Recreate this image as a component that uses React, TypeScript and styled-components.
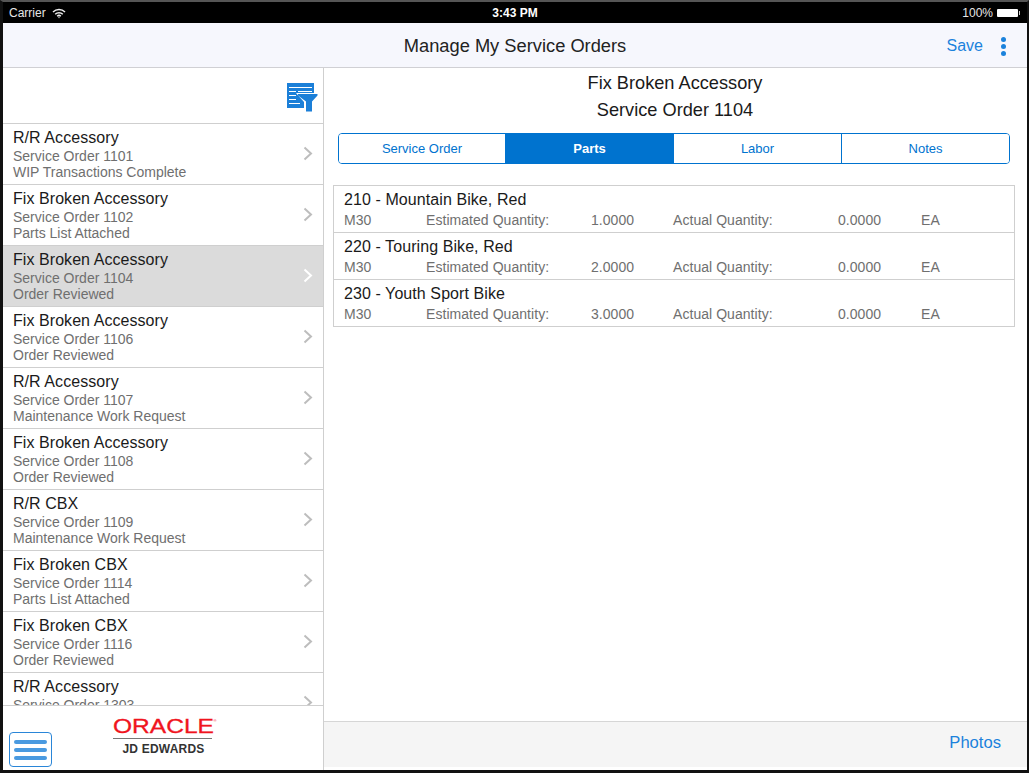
import React from "react";
import styled, { createGlobalStyle } from "styled-components";

const Global = createGlobalStyle`
  html, body { margin: 0; padding: 0; background: #000; }
  body { font-family: "Liberation Sans", Arial, sans-serif; }
  * { box-sizing: border-box; }
`;

const Frame = styled.div`
  width: 1029px;
  height: 773px;
  display: flex;
  flex-direction: column;
  background: #000;
  border-top: 2px solid #555;
  border-left: 3px solid #111;
  border-right: 2px solid #111;
  border-bottom: 3px solid #111;
  overflow: hidden;
`;

const StatusBar = styled.div`
  height: 21px;
  flex: none;
  background: #000;
  color: #e6e6e6;
  font-size: 12px;
  display: grid;
  grid-template-columns: 1fr auto 1fr;
  align-items: center;
  padding: 1px 9px 0 6px;
`;

const StatusLeft = styled.div`
  display: flex;
  align-items: center;
  gap: 6px;
`;

const StatusRight = styled.div`
  display: flex;
  align-items: center;
  justify-content: flex-end;
  gap: 4px;
`;

const Clock = styled.div`
  font-weight: 700;
  color: #fff;
  font-size: 12px;
  margin-left: 3px;
`;

const Battery = styled.div`
  width: 21px;
  height: 8px;
  background: #fff;
  border-radius: 1px;
  position: relative;
  &::after {
    content: "";
    position: absolute;
    right: -2px;
    top: 2px;
    width: 1px;
    height: 4px;
    background: #ccc;
  }
`;

const NavBar = styled.div`
  height: 45px;
  flex: none;
  background: #f6f7fd;
  border-bottom: 1px solid #d0d0d4;
  display: grid;
  grid-template-columns: 1fr auto 1fr;
  align-items: center;
`;

const NavTitle = styled.div`
  font-size: 18.3px;
  color: #222;
  padding-top: 1px;
`;

const NavActions = styled.div`
  display: flex;
  justify-content: flex-end;
  align-items: center;
  gap: 18px;
  padding: 2px 21px 0 0;
`;

const LinkText = styled.span`
  color: #1b82dc;
  font-size: 16px;
`;

const PhotosLink = styled(LinkText)`
  font-size: 16.6px;
`;

const Kebab = styled.div`
  display: flex;
  flex-direction: column;
  gap: 2px;
  i {
    display: block;
    width: 5px;
    height: 5px;
    border-radius: 50%;
    background: #1b82dc;
  }
`;

const Body = styled.div`
  flex: 1;
  min-height: 0;
  display: flex;
  background: #fff;
`;

const Sidebar = styled.aside`
  width: 321px;
  flex: none;
  display: flex;
  flex-direction: column;
  border-right: 1px solid #cfcfcf;
`;

const FilterBar = styled.div`
  height: 56px;
  flex: none;
  border-bottom: 1px solid #cfcfcf;
  display: flex;
  justify-content: flex-end;
  padding: 15px 5px 0 0;
`;

const List = styled.div`
  flex: 1;
  min-height: 0;
  overflow: hidden;
`;

const Row = styled.div<{ $selected?: boolean }>`
  height: 61px;
  border-bottom: 1px solid #cfcfcf;
  padding: 4px 10px 0 10px;
  position: relative;
  background: ${(p) => (p.$selected ? "#dbdbdb" : "#fff")};
`;

const RowTitle = styled.div`
  font-size: 16px;
  line-height: 19px;
  letter-spacing: 0.06px;
  color: #1a1a1a;
  margin-bottom: 1px;
`;

const RowSub = styled.div`
  font-size: 14px;
  line-height: 16px;
  color: #6f6f6f;
`;

const Chevron = styled.svg`
  position: absolute;
  right: 10px;
  top: 22px;
  width: 10px;
  height: 15px;
`;

const SideFooter = styled.div`
  height: 65px;
  flex: none;
  border-top: 1px solid #cfcfcf;
  display: flex;
  position: relative;
  justify-content: center;
`;

const MenuButton = styled.div`
  position: absolute;
  left: 6px;
  bottom: 3px;
  width: 43px;
  height: 35px;
  border: 1px solid #2a86d8;
  border-radius: 4px;
  display: flex;
  flex-direction: column;
  justify-content: center;
  align-items: center;
  gap: 4px;
  i {
    display: block;
    width: 33px;
    height: 4px;
    border-radius: 2px;
    background: #4a9ae0;
  }
`;

const Logo = styled.div`
  width: 104px;
  margin-left: 3px;
  padding-top: 10px;
  display: flex;
  flex-direction: column;
  align-items: flex-start;
`;

const LogoMark = styled.svg`
  width: 104px;
  height: 20px;
  display: block;
`;

const LogoRule = styled.div`
  width: 99px;
  height: 1px;
  background: #777;
  margin-top: 2px;
`;

const LogoSub = styled.div`
  font-size: 12px;
  font-weight: 700;
  letter-spacing: 0.2px;
  color: #333;
  margin: 3px 0 0 10px;
  line-height: 14px;
`;

const Main = styled.main`
  flex: 1;
  min-width: 0;
  display: flex;
  flex-direction: column;
`;

const Content = styled.div`
  flex: 1;
  min-height: 0;
  padding: 0 12px 0 9px;
`;

const Heading = styled.div`
  font-size: 18.2px;
  line-height: 27px;
  color: #1a1a1a;
  text-align: center;
  padding: 2px 0 0 2px;
`;

const Tabs = styled.div`
  margin: 9px 5px 0 5px;
  height: 31px;
  display: grid;
  grid-template-columns: 166px 168px 168px 1fr;
  border: 1px solid #0073cf;
  border-radius: 4px;
  overflow: hidden;
`;

const Tab = styled.div<{ $active?: boolean }>`
  display: flex;
  align-items: center;
  justify-content: center;
  font-size: 13px;
  color: ${(p) => (p.$active ? "#fff" : "#0073cf")};
  background: ${(p) => (p.$active ? "#0073cf" : "#fff")};
  font-weight: ${(p) => (p.$active ? 700 : 400)};
  & + & { border-left: 1px solid #0073cf; }
`;

const Table = styled.div`
  margin-top: 21px;
  border: 1px solid #cfcfcf;
`;

const Part = styled.div`
  height: 46px;
  padding: 4px 10px 0 10px;
  & + & {
    height: 47px;
    border-top: 1px solid #cfcfcf;
  }
`;

const PartTitle = styled.div`
  font-size: 16px;
  line-height: 19px;
  letter-spacing: 0.08px;
  color: #1a1a1a;
`;

const PartGrid = styled.div`
  display: grid;
  grid-template-columns: 82px 165px 82px 165px 83px auto;
  font-size: 14px;
  line-height: 17px;
  letter-spacing: 0.05px;
  color: #6f6f6f;
  margin-top: 3px;
`;

const BottomBar = styled.div`
  height: 46px;
  flex: none;
  margin-bottom: 3px;
  background: #f5f5f5;
  border-top: 1px solid #d6d6d6;
  display: flex;
  align-items: center;
  justify-content: flex-end;
  padding: 0 26px 3px 0;
`;

const rows = [
  ["R/R Accessory", "Service Order 1101", "WIP Transactions Complete"],
  ["Fix Broken Accessory", "Service Order 1102", "Parts List Attached"],
  ["Fix Broken Accessory", "Service Order 1104", "Order Reviewed"],
  ["Fix Broken Accessory", "Service Order 1106", "Order Reviewed"],
  ["R/R Accessory", "Service Order 1107", "Maintenance Work Request"],
  ["Fix Broken Accessory", "Service Order 1108", "Order Reviewed"],
  ["R/R CBX", "Service Order 1109", "Maintenance Work Request"],
  ["Fix Broken CBX", "Service Order 1114", "Parts List Attached"],
  ["Fix Broken CBX", "Service Order 1116", "Order Reviewed"],
  ["R/R Accessory", "Service Order 1303", "Order Reviewed"],
];

const parts = [
  ["210 - Mountain Bike, Red", "1.0000"],
  ["220 - Touring Bike, Red", "2.0000"],
  ["230 - Youth Sport Bike", "3.0000"],
];

const Wifi = () => (
  <svg width="14" height="11" viewBox="0 0 14 11" fill="none" stroke="#eee" strokeWidth="1.5">
    <path d="M1 4 A8.5 8.5 0 0 1 13 4" />
    <path d="M3.2 6.2 A5.4 5.4 0 0 1 10.8 6.2" />
    <path d="M5.2 8.2 A2.6 2.6 0 0 1 8.8 8.2" />
    <circle cx="7" cy="9.6" r="0.7" fill="#eee" stroke="none" />
  </svg>
);

const FilterIcon = () => (
  <svg width="31" height="29" viewBox="0 0 31 29">
    <rect x="0" y="0" width="27" height="25" fill="#1b7fd8" />
    <g fill="#fff">
      <rect x="2" y="4" width="23" height="1" />
      <rect x="2" y="8" width="7" height="1" />
      <rect x="11" y="8" width="14" height="1" />
      <rect x="2" y="12" width="7" height="1" />
      <rect x="2" y="16" width="7" height="1" />
      <rect x="2" y="20" width="11" height="1" />
    </g>
    <path d="M9 10H31V29H17V19Z" fill="#fff" />
    <path d="M11 11H30.5V12.5L25 18.5V28.5H19V18.5L11 12.5Z" fill="#1b7fd8" />
  </svg>
);

export default function App() {
  return (
    <Frame>
      <Global />
      <StatusBar>
        <StatusLeft>
          Carrier <Wifi />
        </StatusLeft>
        <Clock>3:43 PM</Clock>
        <StatusRight>
          100% <Battery />
        </StatusRight>
      </StatusBar>
      <NavBar>
        <div />
        <NavTitle>Manage My Service Orders</NavTitle>
        <NavActions>
          <LinkText>Save</LinkText>
          <Kebab>
            <i />
            <i />
            <i />
          </Kebab>
        </NavActions>
      </NavBar>
      <Body>
        <Sidebar>
          <FilterBar>
            <FilterIcon />
          </FilterBar>
          <List>
            {rows.map((r, i) => (
              <Row key={i} $selected={i === 2}>
                <RowTitle>{r[0]}</RowTitle>
                <RowSub>{r[1]}</RowSub>
                <RowSub>{r[2]}</RowSub>
                <Chevron viewBox="0 0 10 15" fill="none" stroke={i === 2 ? "#fff" : "#bdbdbd"} strokeWidth="2">
                  <path d="M1.5 1.5 L8 7.5 L1.5 13.5" />
                </Chevron>
              </Row>
            ))}
          </List>
          <SideFooter>
            <Logo>
              <LogoMark viewBox="0 0 104 20">
                <text
                  x="0"
                  y="17"
                  fontSize="20"
                  textLength="101"
                  lengthAdjust="spacingAndGlyphs"
                  fill="#f0141e"
                  stroke="#f0141e"
                  strokeWidth="0.3"
                  fontFamily="'Liberation Sans', Arial, sans-serif"
                >
                  ORACLE
                </text>
                <text x="100.5" y="6" fontSize="4" fill="#f0141e" fontFamily="'Liberation Sans', Arial, sans-serif">
                  ®
                </text>
              </LogoMark>
              <LogoRule />
              <LogoSub>JD EDWARDS</LogoSub>
            </Logo>
            <MenuButton>
              <i />
              <i />
              <i />
            </MenuButton>
          </SideFooter>
        </Sidebar>
        <Main>
          <Content>
            <Heading>
              Fix Broken Accessory
              <br />
              Service Order 1104
            </Heading>
            <Tabs>
              <Tab>Service Order</Tab>
              <Tab $active>Parts</Tab>
              <Tab>Labor</Tab>
              <Tab>Notes</Tab>
            </Tabs>
            <Table>
              {parts.map((p) => (
                <Part key={p[0]}>
                  <PartTitle>{p[0]}</PartTitle>
                  <PartGrid>
                    <span>M30</span>
                    <span>Estimated Quantity:</span>
                    <span>{p[1]}</span>
                    <span>Actual Quantity:</span>
                    <span>0.0000</span>
                    <span>EA</span>
                  </PartGrid>
                </Part>
              ))}
            </Table>
          </Content>
          <BottomBar>
            <PhotosLink>Photos</PhotosLink>
          </BottomBar>
        </Main>
      </Body>
    </Frame>
  );
}
